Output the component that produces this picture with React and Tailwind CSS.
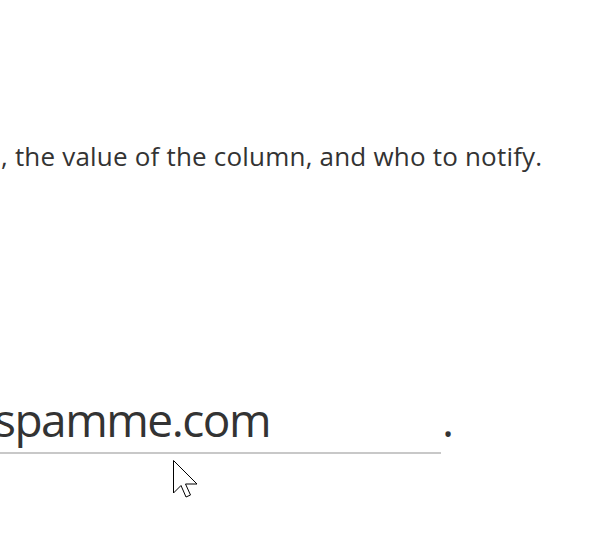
export default function App() {
  return (
    <div className="relative w-[600px] h-[539px] overflow-hidden bg-white text-[#333333]" style={{ fontFamily: '"Open Sans", "Noto Sans", sans-serif' }}>
      <div className="pt-[139px] pl-[1px]">
        <p className="text-[26px] leading-[34px] tracking-[0.2px] whitespace-nowrap">, the value of the column, and who to notify.</p>
      </div>
      <div className="mt-[222px] flex items-baseline -ml-[6px]">
        <div className="w-[447px] border-b-2 border-[#c8c8c8] text-[46px] leading-[48px] pb-[9px] tracking-[-1.5px] whitespace-nowrap">spamme.com</div>
        <span className="text-[46px] leading-[48px] ml-[1px]">.</span>
      </div>
      <svg className="absolute left-[173px] top-[460px]" width="26" height="40" viewBox="0 0 26 40">
        <path d="M0.5 0.5 L0.5 33 L8 25.5 L13 37 L17.5 35 L12.5 24 L24 24 Z" fill="#fff" stroke="#000" strokeWidth="1" />
      </svg>
    </div>
  );
}
